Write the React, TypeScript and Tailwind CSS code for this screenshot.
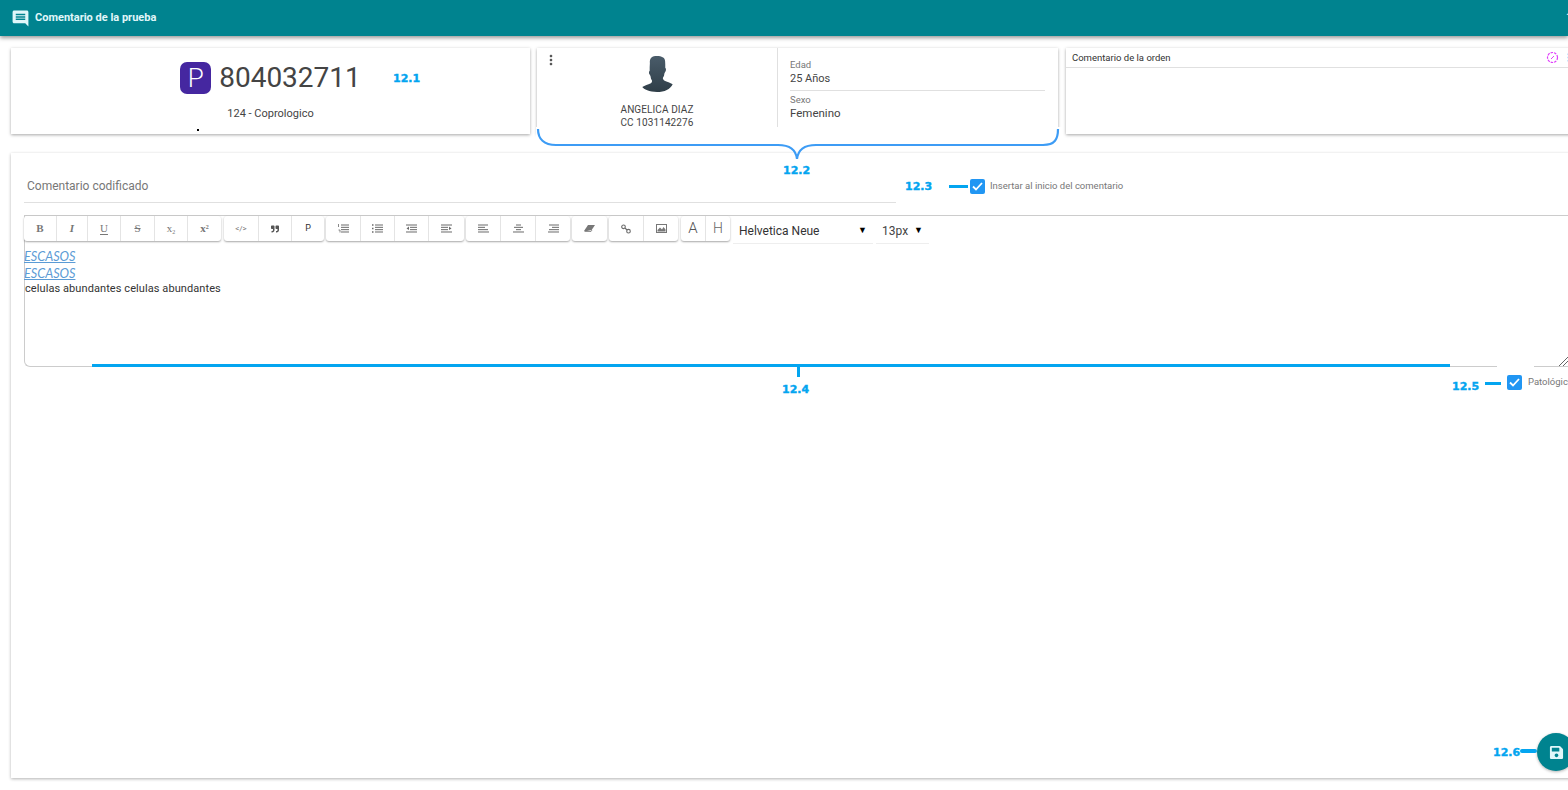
import React from "react";
import { MdComment, MdMoreVert } from "react-icons/md";
import { FaQuoteRight, FaSave } from "react-icons/fa";

type Btn = { w: string; c: React.ReactNode };
const serif = "font-['Liberation_Serif',serif] text-[11px] text-[#777]";

const G = ({ children, w = 11 }: { children: React.ReactNode; w?: number }) => (
  <svg width={w} height="9" viewBox={`0 0 ${w} 9`} fill="none" stroke="#6a6a6a" strokeWidth="1">
    {children}
  </svg>
);

const lines = (rows: [number, number][]) => rows.map(([a, b], i) => <path key={i} d={`M${a} ${1 + i * 2.33}H${b}`} />);

const listOl = (
  <G>
    {lines([[3, 11], [3, 11], [3, 11], [3, 11]])}
    <path d="M0.500 0v3M0.500 6h1.500v2.500" strokeWidth="0.800" />
  </G>
);
const listUl = (
  <G>
    {lines([[3, 11], [3, 11], [3, 11], [3, 11]])}
    <path d="M0 1h1.500M0 4.500h1.500M0 8h1.500" strokeWidth="1.300" />
  </G>
);
const outdent = (
  <G>
    {lines([[0, 11], [4, 11], [4, 11], [0, 11]])}
    <path d="M3 2.500L0.500 4.500 3 6z" fill="#6a6a6a" stroke="none" />
  </G>
);
const indent = (
  <G>
    {lines([[0, 11], [0, 7], [0, 7], [0, 11]])}
    <path d="M8 2.500l2.500 2L8 6z" fill="#6a6a6a" stroke="none" />
  </G>
);
const alignL = <G>{lines([[0, 10], [0, 7], [0, 10], [0, 11]])}</G>;
const alignC = <G>{lines([[3, 8], [1, 10], [3, 8], [0, 11]])}</G>;
const alignR = <G>{lines([[1, 11], [4, 11], [1, 11], [0, 11]])}</G>;
const eraser = (
  <svg width="11" height="9" viewBox="0 0 11 9">
    <path d="M4 1h7L7 7H0z" fill="#777" />
    <path d="M0.500 7.500h6.500l1-1.500" fill="#fff" stroke="#777" strokeWidth="0.800" />
  </svg>
);
const link = (
  <svg width="10" height="10" viewBox="0 0 10 10" fill="none" stroke="#6a6a6a" strokeWidth="1.100">
    <circle cx="2.500" cy="2.800" r="1.800" />
    <circle cx="7.500" cy="7.200" r="1.800" />
    <path d="M4 4l2 2" />
  </svg>
);
const image = (
  <svg width="11" height="9" viewBox="0 0 11 9">
    <rect x="0.500" y="0.500" width="10" height="8" fill="#fff" stroke="#777" strokeWidth="1" />
    <path d="M1.500 7.500V6l2.500-2.500 2 2 1.500-2.500 2 2.500v2z" fill="#777" />
  </svg>
);

const groups: Btn[][] = [
  [
    { w: "w-[33px]", c: <span className={serif + " font-bold"}>B</span> },
    { w: "w-[31px]", c: <span className={serif + " italic font-bold"}>I</span> },
    { w: "w-[33px]", c: <span className={serif + " underline underline-offset-2"}>U</span> },
    { w: "w-[34px]", c: <span className={serif + " line-through"}>S</span> },
    { w: "w-[33px]", c: <span className={serif + " text-[9px]"}>x<sub className="text-[6px]">2</sub></span> },
    { w: "w-[33px]", c: <span className={serif + " text-[9px] font-bold"}>x<sup className="text-[6px]">2</sup></span> },
  ],
  [
    { w: "w-[35px]", c: <span className="text-[8px] text-[#777]">&lt;/&gt;</span> },
    { w: "w-[33px]", c: <FaQuoteRight className="text-[8px] text-[#555]" /> },
    { w: "w-[32px]", c: <span className="text-[9px] text-[#333]">P</span> },
  ],
  [
    { w: "w-[35px]", c: listOl },
    { w: "w-[34px]", c: listUl },
    { w: "w-[34px]", c: outdent },
    { w: "w-[35px]", c: indent },
  ],
  [
    { w: "w-[35px]", c: alignL },
    { w: "w-[35px]", c: alignC },
    { w: "w-[34px]", c: alignR },
  ],
  [{ w: "w-[35px]", c: eraser }],
  [
    { w: "w-[35px]", c: link },
    { w: "w-[34px]", c: image },
  ],
  [
    { w: "w-[25px]", c: <span className="text-[15px] font-light text-[#555]">A</span> },
    { w: "w-[24px]", c: <span className="text-[14px] font-light text-[#666]">H</span> },
  ],
];

const Note = ({ className, children }: { className: string; children: React.ReactNode }) => (
  <div className={"absolute font-['DejaVu_Sans',sans-serif] font-bold text-[11px] leading-none text-[#03a5f0] [-webkit-text-stroke:0.4px_#03a5f0] " + className}>{children}</div>
);

const Check = () => (
  <span className="flex h-[15px] w-[15px] items-center justify-center rounded-[2px] bg-[#2196f3]">
    <svg width="11" height="9" viewBox="0 0 11 9" fill="none" stroke="#fff" strokeWidth="1.800">
      <path d="M1 4.500l3 3 6-6.500" />
    </svg>
  </span>
);

const Card = ({ className, children }: { className: string; children?: React.ReactNode }) => (
  <section className={"relative h-[86px] shrink-0 bg-white shadow-[0_1px_3px_rgba(0,0,0,0.35)] " + className}>{children}</section>
);

export default function App() {
  return (
    <div className="relative flex h-[790px] w-[1568px] flex-col overflow-hidden bg-white font-['Roboto',sans-serif] text-[#444]">
      <header className="flex h-9 shrink-0 items-center justify-between bg-[#00838f] pl-[11px] shadow-[0_2px_4px_rgba(0,0,0,0.4)]">
        <div className="flex items-center gap-[5px]">
          <MdComment className="text-[19px] text-[#e0f7fa]" />
          <span className="text-[11px] font-bold text-[#e0f7fa]">Comentario de la prueba</span>
        </div>
        <span className="w-[2px] text-[11px] text-white">1</span>
      </header>

      <div className="mt-3 flex gap-[7px] pl-[11px]">
        <Card className="w-[519px]">
          <div className="flex flex-col items-center pt-[14px]">
            <div className="flex items-center gap-2">
              <span className="flex h-[32px] w-[31px] items-center justify-center rounded-[7px] bg-[#4527a0] text-[26px] font-light leading-none text-white">P</span>
              <span className="text-[28px] leading-[32px] text-[#444]">804032711</span>
            </div>
            <span className="mt-[13px] text-[11px] leading-[13px] text-[#444]">124 - Coprologico</span>
          </div>
          <span className="absolute left-[186px] top-[81px] h-[2px] w-[2px] bg-black" />
        </Card>

        <Card className="flex w-[521px]">
          <div className="relative flex h-[79px] w-[241px] shrink-0 flex-col items-center border-r border-[#e0e0e0] pt-[7px]">
            <MdMoreVert className="absolute left-[6px] top-[4px] text-[16px] text-[#555]" />
            <svg className="shrink-0" width="34" height="38" viewBox="0 0 34 40">
              <defs>
                <linearGradient id="av" x1="0" x2="0" y1="0" y2="1">
                  <stop offset="0" stopColor="#4a5c6a" />
                  <stop offset="1" stopColor="#2f3e48" />
                </linearGradient>
              </defs>
              <path fill="url(#av)" d="M17 1c5 0 8 1.500 8.500 5 .3 2.500.2 5 .2 7.500 1 .8 1 2.500.2 3.800-.6 1-1 1.500-1.200 2.700-.2 1.800-.8 3-1.400 3.800-.4 1 .2 2.400 1.700 3.200 2.200 1.100 6 2 8.500 3.800C31 36 25 39 17 39S3 36 1.500 33.800c2.500-1.800 6.300-2.700 8.500-3.800 1.500-.8 2.100-2.200 1.700-3.200-.6-.8-1.200-2-1.400-3.800-.2-1.200-.6-1.700-1.200-2.700-.8-1.300-.8-3 .2-3.800 0-2.500-.1-5 .2-7.500C9 2.500 12 1 17 1z" />
            </svg>
            <span className="mt-[10px] shrink-0 text-[10px] leading-[13px] tracking-[0.1px] text-[#444]">ANGELICA DIAZ</span>
            <span className="shrink-0 text-[10px] leading-[13px] tracking-[0.1px] text-[#444]">CC 1031142276</span>
          </div>
          <div className="flex h-[79px] flex-1 flex-col pl-[12px] pr-[13px] pt-[11px]">
            <span className="text-[9.5px] leading-[12px] text-[#777]">Edad</span>
            <span className="mt-[1px] text-[11px] leading-[14px] text-[#444]">25 Años</span>
            <div className="mt-[4px] border-t border-[#e0e0e0]" />
            <span className="mt-[3px] text-[9.5px] leading-[12px] text-[#777]">Sexo</span>
            <span className="text-[11.5px] leading-[14px] text-[#444]">Femenino</span>
          </div>
        </Card>

        <Card className="ml-[1px] w-[560px]">
          <div className="flex h-5 items-center border-b border-[#e0e0e0] pl-[6px]">
            <span className="mt-[1px] text-[9.5px] text-[#333]">Comentario de la orden</span>
            <svg className="ml-[375px]" width="13" height="13" viewBox="0 0 13 13">
              <circle cx="6.500" cy="6.500" r="5" fill="none" stroke="#e040fb" strokeWidth="1.200" strokeDasharray="2.500 1" />
              <path d="M5 8l3-3" stroke="#e040fb" strokeWidth="1" />
            </svg>
            <MdMoreVert className="ml-[3px] text-[13px] text-[#90caf9]" />
          </div>
        </Card>
      </div>

      <main className="relative ml-[11px] mt-[19px] h-[625px] w-[1600px] shrink-0 bg-white shadow-[0_1px_3px_rgba(0,0,0,0.3)]">
        <div className="flex h-[62px] items-start pl-[13px]">
          <div className="mt-[20px] h-[30px] w-[872px] border-b border-[#e0e0e0] pl-[3px] text-[12px] leading-[26px] text-[#777]">Comentario codificado</div>
          <div className="ml-[74px] mt-[26px] flex items-center gap-[5px]">
            <Check />
            <span className="text-[9.5px] text-[#777]">Insertar al inicio del comentario</span>
          </div>
        </div>

        <div className="ml-[13px] h-[152px] rounded-bl-[6px] border-b border-l border-t border-[#ccc]">
          <div className="-ml-px flex items-start">
            <div className="flex gap-[2px]">
              {groups.map((g, i) => (
                <div key={i} className={"flex h-[25px] rounded-[3px] bg-white shadow-[0_1px_2px_rgba(0,0,0,0.35)] " + (i === 1 || i === 6 ? "ml-px" : "")}>
                  {g.map((b, j) => (
                    <div key={j} className={"flex h-full items-center justify-center border-r border-[#e4e4e4] last:border-r-0 " + b.w}>{b.c}</div>
                  ))}
                </div>
              ))}
            </div>
            <div className="ml-[3px] flex h-[28px] w-[140px] items-center justify-between border-b border-[#eee] pl-[6px] pr-[6px] pt-[2px]">
              <span className="text-[12px] text-[#333]">Helvetica Neue</span>
              <span className="text-[9px] text-black">▼</span>
            </div>
            <div className="ml-[3px] flex h-[28px] w-[53px] items-center justify-between border-b border-[#eee] pl-[6px] pr-[6px] pt-[2px]">
              <span className="text-[12px] text-[#444]">13px</span>
              <span className="text-[9px] text-black">▼</span>
            </div>
          </div>
          <div className="-mt-[2px] pt-[5px]">
            <div className="-ml-px font-['Lato',sans-serif] text-[12.7px] italic leading-[18px] text-[#5b9bd5] underline">ESCASOS</div>
            <div className="-ml-px font-['Lato',sans-serif] text-[12.7px] italic leading-[17px] text-[#5b9bd5] underline">ESCASOS</div>
            <div className="text-[11px] leading-[14px] tracking-[0.08px] text-[#333]">celulas abundantes celulas abundantes</div>
          </div>
        </div>

        <div className="absolute left-[1496px] top-[222px] flex items-center gap-[6px]">
          <Check />
          <span className="text-[9.5px] text-[#777]">Patológico</span>
        </div>

        <button className="absolute left-[1526px] top-[580px] flex h-[38px] w-[38px] items-center justify-center rounded-full bg-[#00838f] shadow-[0_1px_3px_rgba(0,0,0,0.3)]">
          <FaSave className="text-[15px] text-[#e0f7fa]" />
        </button>
      </main>

      {/* Callouts drawn over the page */}
      <svg className="absolute left-[530px] top-[125px]" width="535" height="38" viewBox="0 0 535 38">
        <rect x="6" y="2" width="526" height="24" fill="#fff" />
        <path d="M8 4c0 10 6 16 18 16h222c12 0 18 5 19 14 1-9 7-14 19-14h227c12 0 15-6 15-16" fill="none" stroke="#3d9cf5" strokeWidth="2.200" />
      </svg>
      <Note className="left-[393px] top-[73px]">12.1</Note>
      <Note className="left-[783px] top-[165px]">12.2</Note>
      <Note className="left-[905px] top-[181px]">12.3</Note>
      <div className="absolute left-[949px] top-[185px] h-[3px] w-[19px] bg-[#03a5f0]" />
      <div className="absolute left-[92px] top-[364px] h-[3px] w-[1358px] bg-[#03a5f0]" />
      <div className="absolute left-[797px] top-[366px] h-[11px] w-[3px] bg-[#03a5f0]" />
      <Note className="left-[782px] top-[384px]">12.4</Note>
      <Note className="left-[1452px] top-[381px]">12.5</Note>
      <div className="absolute left-[1485px] top-[382px] h-[3px] w-[16px] bg-[#03a5f0]" />
      <div className="absolute left-[1497px] top-[364px] h-[4px] w-[37px] bg-white" />
      <Note className="left-[1493px] top-[747px]">12.6</Note>
      <div className="absolute left-[1520px] top-[749px] h-[4px] w-[17px] rounded-full bg-[#03a5f0]" />
      <svg className="absolute left-[1558px] top-[356px]" width="10" height="10" viewBox="0 0 10 10">
        <path d="M1 10L10 1M5 10l5-5" stroke="#666" strokeWidth="1" />
      </svg>
    </div>
  );
}
